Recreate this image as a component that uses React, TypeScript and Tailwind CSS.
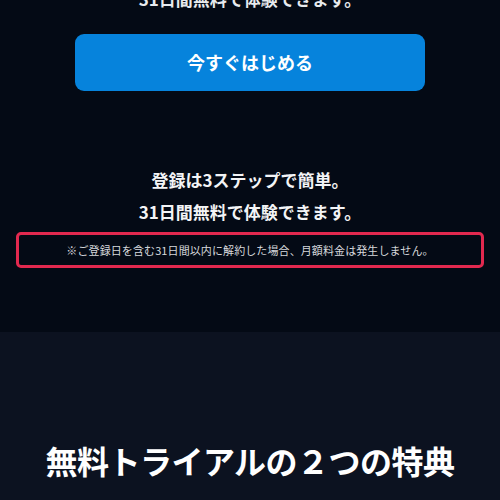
export default function App() {
  return (
    <div
      className="w-[500px] h-[500px] overflow-hidden bg-[#050b16] text-white"
      style={{ fontFamily: '"Noto Sans CJK JP", "Noto Sans", sans-serif' }}
    >
      <section className="flex flex-col items-center bg-[#040a15] pb-[64px]">
        <p className="mt-[-17px] h-[32px] leading-[32px] text-[17px] font-bold text-[#e8eaee]">
          31日間無料で体験できます。
        </p>
        <button className="mt-[19px] w-[350px] h-[57px] rounded-[9px] bg-[#0683dc] text-[18px] font-bold text-white">
          今すぐはじめる
        </button>
        <div className="mt-[73px] flex flex-col items-center text-[17px] font-bold leading-[32px] text-[#f3f4f6]">
          <p>登録は3ステップで簡単。</p>
          <p>31日間無料で体験できます。</p>
        </div>
        <div className="mt-[4px] w-[468px] h-[36px] flex items-center justify-center rounded-[5px] border-[3.5px] border-[#e2294f]">
          <p className="text-[11px] tracking-[0.1px] text-[#d6d8dc]">
            ※ご登録日を含む31日間以内に解約した場合、月額料金は発生しません。
          </p>
        </div>
      </section>
      <section className="bg-[#0c1220] pt-[106px] h-[200px]">
        <h2 className="text-center text-[32px] leading-[44px] font-bold tracking-[-0.5px]">
          無料トライアルの２つの特典
        </h2>
      </section>
    </div>
  )
}
